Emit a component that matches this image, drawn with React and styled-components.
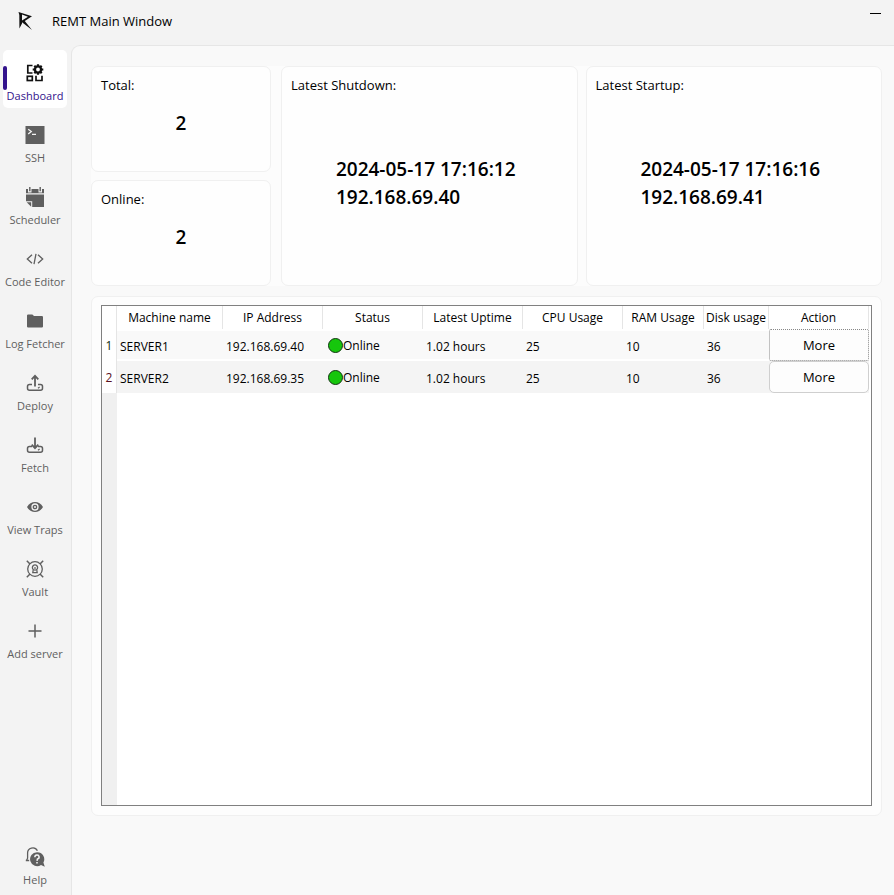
import React from "react";
import styled, { createGlobalStyle } from "styled-components";

const GlobalStyle = createGlobalStyle`
  *, *::before, *::after { box-sizing: border-box; }
  body {
    margin: 0;
    background: #f3f3f3;
    color: #000;
    font-family: "Open Sans", "Noto Sans", sans-serif;
    font-size: 13px;
  }
  button { font-family: inherit; color: inherit; }
`;

const Window = styled.div`
  min-height: 100vh;
  display: grid;
  grid-template-columns: 71px minmax(0, 1fr);
  grid-template-rows: 45px 1fr;
`;

const TitleBar = styled.header`
  grid-column: 1 / -1;
  display: flex;
  align-items: center;
  padding: 0 13px 3px 17px;
`;

const Title = styled.h1`
  flex: 1;
  margin: 0 0 0 19px;
  font-size: 13px;
  font-weight: 400;
  line-height: 20px;
`;

const MinimizeButton = styled.button`
  align-self: flex-start;
  display: flex;
  padding: 13px 0;
  border: 0;
  background: none;
`;

const Sidebar = styled.nav`
  display: flex;
  flex-direction: column;
  gap: 4px;
  padding: 5px 4px 3px 3px;
`;

const Spacer = styled.div`
  flex: 1;
`;

const NavButton = styled.button`
  position: relative;
  display: flex;
  flex-direction: column;
  align-items: center;
  gap: 4px;
  height: 58px;
  padding: 13px 0 0;
  border: 0;
  border-radius: 5px;
  background: ${(p) => (p.$active ? "#ffffff" : "transparent")};
  color: ${(p) => (p.$active ? "#33138c" : "#5f5f5f")};
  font-size: 11px;
  line-height: 18px;
  white-space: nowrap;

  svg { color: ${(p) => (p.$active ? "#111111" : "#5f5f5f")}; flex: none; }

  &::before {
    content: "";
    display: ${(p) => (p.$active ? "block" : "none")};
    position: absolute;
    left: 0;
    top: 16px;
    width: 4px;
    height: 24px;
    border-radius: 2px;
    background: #33138c;
  }
`;

const Content = styled.main`
  display: flex;
  flex-direction: column;
  gap: 10px;
  padding: 20px 12px 20px 19px;
  border: solid #e6e6e6;
  border-width: 1px 0 0 1px;
  border-radius: 9px 0 0 0;
  background: #f9f9f9;
`;

const Summary = styled.section`
  display: grid;
  grid-template-columns: 180px minmax(0, 1fr);
  gap: 10px;
  height: 220px;
  border-radius: 8px;
  background: #fcfcfc;
`;

const Counters = styled.div`
  display: grid;
  grid-template-rows: 1fr 1fr;
  gap: 8px;
`;

const Events = styled.div`
  display: grid;
  grid-template-columns: 1fr 1fr;
  gap: 8px;
`;

const Card = styled.article`
  display: flex;
  flex-direction: column;
  padding: ${(p) => (p.$event ? "8px 16px 15px 9px" : "8px 9px 21px")};
  border: 1px solid #f0f0f0;
  border-radius: 7px;
  background: #fefefe;
`;

const CardLabel = styled.h2`
  margin: 0;
  font-size: 13px;
  font-weight: 400;
  line-height: 20px;
`;

const CardValue = styled.p`
  margin: auto;
  font-size: 19px;
  font-weight: 600;
  line-height: 28px;
`;

const TablePanel = styled.section`
  height: 520px;
  padding: 8px 9px 9px;
  border: 1px solid #f0f0f0;
  border-radius: 7px;
  background: #fdfdfd;
`;

const TableFrame = styled.div`
  height: 100%;
  border: 1px solid #808080;
  background: linear-gradient(to right, #f0f0f0 15px, #ffffff 15px);
  overflow: hidden;
`;

const Table = styled.table`
  width: 100%;
  table-layout: fixed;
  border-collapse: separate;
  border-spacing: 0;
`;

const Col = styled.col`
  width: ${(p) => p.$width}px;
`;

const HeadCell = styled.th`
  height: 23px;
  padding: 0;
  border-right: ${(p) => (p.$last ? "0" : "1px solid #e5e5e5")};
  background: #ffffff;
  font-size: 12px;
  font-weight: 400;
  line-height: 22px;
  white-space: nowrap;
`;

const RowNumber = styled.th`
  padding: 0;
  border-right: 1px solid #e5e5e5;
  background: #ffffff;
  color: ${(p) => (p.$alt ? "#5a1020" : "#103010")};
  font-size: 12px;
  font-weight: 400;
`;

const Row = styled.tr`
  height: 32px;
`;

const Cell = styled.td`
  padding: ${(p) => (p.$widget ? "0 0 0 5px" : "2px 0 0 3px")};
  border: solid #ffffff;
  border-width: ${(p) => (p.$alt ? "0" : "2px 0")};
  background: ${(p) => (p.$alt ? "#f4f4f4" : "#f9f9f9")};
  font-size: 12px;
  white-space: nowrap;
`;

const ActionCell = styled.td`
  padding: 0;
  background: ${(p) => (p.$alt ? "#f4f4f4" : "#f9f9f9")};
`;

const BlankCell = styled.td`
  padding: 0;
  background: #ffffff;
`;

const Status = styled.span`
  display: flex;
  align-items: center;
`;

const Dot = styled.span`
  width: 15px;
  height: 15px;
  border: 1px solid #123512;
  border-radius: 50%;
  background: #16c60c;
`;

const MoreButton = styled.button`
  display: block;
  width: 100%;
  height: 32px;
  padding: 0;
  border: 1px ${(p) => (p.$focused ? "dotted #888888" : "solid #cfcfcf")};
  border-radius: ${(p) => (p.$focused ? "2px" : "5px")};
  background: #fdfdfd;
  font-size: 13px;
  line-height: 20px;
`;

const Icon = ({ children }) => (
  <svg width="20" height="20" viewBox="0 0 20 20" fill="none" stroke="currentColor" strokeWidth="1.5" aria-hidden="true">
    {children}
  </svg>
);

const Logo = () => (
  <svg width="16" height="20" viewBox="0 0 16 20" fill="#111" aria-hidden="true">
    <path d="M1.5 1L15 5.2L7.8 10L15 19L5 11.2V9.4L11 5.7L5 3.4V12.5L2.4 17.5L2.3 4Z" />
  </svg>
);

const DashboardIcon = () => (
  <Icon>
    <path d="M7.5 2.5H2.8V10H7.5" strokeWidth="1.7" />
    <rect x="2.3" y="13.3" width="5" height="4.2" strokeWidth="1.7" />
    <path d="M11 12.7V17.5H17V12.7" strokeWidth="1.7" />
    <circle cx="13" cy="6.5" r="3.1" strokeWidth="2.4" />
    <path d="M13 1.2V3.5M13 9.5V11.8M7.7 6.5H10M16 6.5H18.3M9.3 2.8L10.8 4.3M15.2 8.7L16.7 10.2M16.7 2.8L15.2 4.3M10.8 8.7L9.3 10.2" strokeWidth="2.2" />
  </Icon>
);

const SshIcon = () => (
  <Icon>
    <rect x="0.5" y="1" width="19" height="18" fill="currentColor" stroke="none" />
    <path d="M3.2 4.2L6.3 6.6L3.2 9M7 9.3H11" stroke="#f3f3f3" strokeWidth="1.3" />
  </Icon>
);

const SchedulerIcon = () => (
  <Icon>
    <path d="M1 2H3V5.5H6.5V2H13.5V5.5H17V2H19V6.3H1Z" fill="currentColor" stroke="none" />
    <path d="M4.8 0V4.3M15.2 0V4.3" strokeWidth="1.4" />
    <path d="M1 7.5H19V20H7.2V14.3H1Z" fill="currentColor" stroke="none" />
    <path d="M1.7 15.3H6.2V19.8Z" fill="currentColor" stroke="none" />
  </Icon>
);

const CodeIcon = () => (
  <Icon>
    <path d="M7 5.7L2.3 10L7 14.3M13 5.7L17.7 10L13 14.3M11 4.8L9 15.2" strokeWidth="1.3" />
  </Icon>
);

const FolderIcon = () => (
  <Icon>
    <path d="M2 4.5Q2 3.4 3.1 3.4H7.4L9 5H16.9Q18 5 18 6.1V15.4Q18 16.5 16.9 16.5H3.1Q2 16.5 2 15.4Z" fill="currentColor" stroke="none" />
  </Icon>
);

const DeployIcon = () => (
  <Icon>
    <path d="M7 11.5H4.5Q2.5 11.5 2.5 13.5V15.3Q2.5 17.3 4.5 17.3H15.5Q17.5 17.3 17.5 15.3V13.5Q17.5 11.5 15.5 11.5H13" />
    <path d="M10 13.5V3.2M6.7 6.3L10 2.8L13.3 6.3" strokeWidth="1.8" />
    <path d="M13 15.3L14.6 14.1" strokeWidth="1.2" />
  </Icon>
);

const FetchIcon = () => (
  <Icon>
    <path d="M7 11.5H4.5Q2.5 11.5 2.5 13.5V15.3Q2.5 17.3 4.5 17.3H15.5Q17.5 17.3 17.5 15.3V13.5Q17.5 11.5 15.5 11.5H13" />
    <path d="M10 2.5V12.8M6.7 9.7L10 13.2L13.3 9.7" strokeWidth="1.8" />
    <path d="M13 15.3L14.6 14.1" strokeWidth="1.2" />
  </Icon>
);

const EyeIcon = () => (
  <Icon>
    <path d="M2 10Q5 5 10 5T18 10Q15 15 10 15T2 10Z" fill="currentColor" stroke="none" />
    <circle cx="10" cy="10" r="3" fill="currentColor" stroke="#f3f3f3" strokeWidth="1.3" />
    <circle cx="10" cy="10" r="1" fill="#f3f3f3" stroke="none" />
  </Icon>
);

const VaultIcon = () => (
  <Icon>
    <circle cx="10" cy="10" r="7.3" strokeWidth="1.3" />
    <path d="M1.8 1.8L5 5M18.2 1.8L15 5M1.8 18.2L5 15M18.2 18.2L15 15" strokeWidth="1.5" />
    <path d="M8.3 10.5A2.6 2.6 0 1 1 11.7 10.5L12.2 13.7H7.8Z" strokeWidth="1.3" />
    <path d="M10 8V12" strokeWidth="1.2" />
  </Icon>
);

const PlusIcon = () => (
  <Icon>
    <path d="M10 3.5V16.5M3.5 10H16.5" />
  </Icon>
);

const HelpIcon = () => (
  <Icon>
    <path d="M1.5 13.5L2.6 11.2V6.5A5.2 5.2 0 0 1 12.4 3.8M0.8 13.5H4.2" strokeWidth="1.3" />
    <path d="M12 5.2A7 7 0 1 0 16 18L19.8 19.8L18.4 15.5A7 7 0 0 0 12 5.2Z" fill="currentColor" stroke="none" />
    <path d="M9.9 10.2A2.1 2.1 0 1 1 12.4 12.1L12 13.8M12 15V16.5" stroke="#f3f3f3" strokeWidth="1.5" />
  </Icon>
);

const navItems = [
  { label: "Dashboard", icon: DashboardIcon, active: true },
  { label: "SSH", icon: SshIcon },
  { label: "Scheduler", icon: SchedulerIcon },
  { label: "Code Editor", icon: CodeIcon },
  { label: "Log Fetcher", icon: FolderIcon },
  { label: "Deploy", icon: DeployIcon },
  { label: "Fetch", icon: FetchIcon },
  { label: "View Traps", icon: EyeIcon },
  { label: "Vault", icon: VaultIcon },
  { label: "Add server", icon: PlusIcon },
];

const columns = [
  { label: "Machine name", width: 106 },
  { label: "IP Address", width: 100 },
  { label: "Status", width: 100 },
  { label: "Latest Uptime", width: 100 },
  { label: "CPU Usage", width: 100 },
  { label: "RAM Usage", width: 81 },
  { label: "Disk usage", width: 65 },
  { label: "Action", width: 100 },
];

const servers = [
  { name: "SERVER1", ip: "192.168.69.40", status: "Online", uptime: "1.02 hours", cpu: 25, ram: 10, disk: 36 },
  { name: "SERVER2", ip: "192.168.69.35", status: "Online", uptime: "1.02 hours", cpu: 25, ram: 10, disk: 36 },
];

export default function App() {
  return (
    <>
      <GlobalStyle />
      <Window>
        <TitleBar>
          <Logo />
          <Title>REMT Main Window</Title>
          <MinimizeButton aria-label="Minimize">
            <svg width="11" height="1" aria-hidden="true"><rect width="11" height="1" /></svg>
          </MinimizeButton>
        </TitleBar>
        <Sidebar>
          {navItems.map(({ label, icon: NavIcon, active }) => (
            <NavButton key={label} $active={active} aria-current={active ? "page" : undefined}>
              <NavIcon />
              {label}
            </NavButton>
          ))}
          <Spacer />
          <NavButton>
            <HelpIcon />
            Help
          </NavButton>
        </Sidebar>
        <Content>
          <Summary>
            <Counters>
              <Card>
                <CardLabel>Total:</CardLabel>
                <CardValue>2</CardValue>
              </Card>
              <Card>
                <CardLabel>Online:</CardLabel>
                <CardValue>2</CardValue>
              </Card>
            </Counters>
            <Events>
              <Card $event>
                <CardLabel>Latest Shutdown:</CardLabel>
                <CardValue>2024-05-17 17:16:12<br />192.168.69.40</CardValue>
              </Card>
              <Card $event>
                <CardLabel>Latest Startup:</CardLabel>
                <CardValue>2024-05-17 17:16:16<br />192.168.69.41</CardValue>
              </Card>
            </Events>
          </Summary>
          <TablePanel>
            <TableFrame>
              <Table>
                <colgroup>
                  <Col $width={15} />
                  {columns.map((c) => <Col key={c.label} $width={c.width} />)}
                  <col />
                </colgroup>
                <thead>
                  <tr>
                    <HeadCell as="td" />
                    {columns.map((c) => <HeadCell key={c.label} scope="col">{c.label}</HeadCell>)}
                    <HeadCell as="td" $last />
                  </tr>
                </thead>
                <tbody>
                  {servers.map((s, i) => {
                    const alt = i % 2 === 1;
                    return (
                      <Row key={s.name}>
                        <RowNumber scope="row" $alt={alt}>{i + 1}</RowNumber>
                        <Cell $alt={alt}>{s.name}</Cell>
                        <Cell $alt={alt}>{s.ip}</Cell>
                        <Cell $alt={alt} $widget><Status><Dot />{s.status}</Status></Cell>
                        <Cell $alt={alt}>{s.uptime}</Cell>
                        <Cell $alt={alt}>{s.cpu}</Cell>
                        <Cell $alt={alt}>{s.ram}</Cell>
                        <Cell $alt={alt}>{s.disk}</Cell>
                        <ActionCell $alt={alt}>
                          <MoreButton $focused={!alt}>More</MoreButton>
                        </ActionCell>
                        <BlankCell />
                      </Row>
                    );
                  })}
                </tbody>
              </Table>
            </TableFrame>
          </TablePanel>
        </Content>
      </Window>
    </>
  );
}
